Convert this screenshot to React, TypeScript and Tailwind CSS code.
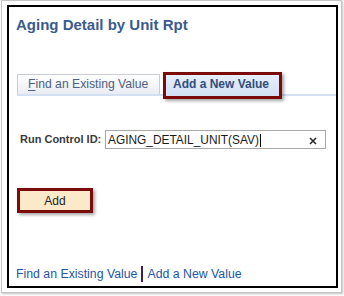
import React from "react";

export default function App() {
  return (
    <div className="w-[344px] h-[296px] bg-white pl-[1px] font-['Liberation_Sans',Arial,sans-serif]">
      <div className="w-[341px] h-[293px] border border-[#c4c4c4] shadow-[1px_1px_2px_rgba(0,0,0,0.25)] pl-[5px] pt-[4px]">
        <div className="w-[331px] h-[283px] border-2 border-black flex flex-col">
          <div className="ml-[7px] mt-[9px] text-[15px] leading-[18px] font-bold text-[#3b5a8e]">
            Aging Detail by Unit Rpt
          </div>

          <div className="ml-[8px] mt-[38px] h-[24px] flex items-start border-b-2 border-[#d3e0f1]">
            <div className="mt-[2px] w-[143px] h-[20px] border border-b-0 border-[#c9cdd3] bg-gradient-to-b from-white to-[#e9edf3] pl-[10px] text-[12.2px] leading-[18px] text-[#4c6183]">
              <span className="underline underline-offset-2">F</span>ind an Existing Value
            </div>
            <div className="relative z-10 ml-[3px] w-[119px] h-[27px] border-[3px] border-[#7b0a0a] bg-gradient-to-b from-[#e6eefa] to-[#d3e1f4] shadow-[2px_2px_3px_rgba(0,0,0,0.35)] pl-[7px] text-[12px] leading-[19px] font-bold text-[#2f4d7e]">
              Add a New Value
            </div>
          </div>

          <div className="mt-[34px] ml-[11px] flex items-center h-[19px]">
            <div className="w-[85px] text-[11px] font-bold text-[#3a3a3a] leading-[19px]">
              Run Control ID:
            </div>
            <div className="w-[221px] h-[19px] border border-[#a8a8a8] bg-white flex items-start pl-[2px] pt-[2px]">
              <span className="text-[11.9px] leading-[14px] text-[#1a1a1a]">
                AGING_DETAIL_UNIT(SAV)
              </span>
              <span className="inline-block w-[1px] h-[13px] bg-black ml-[1px] mt-[1px]" />
              <svg
                className="ml-auto mr-[8px] mt-[4px]"
                width="8"
                height="8"
                viewBox="0 0 8 8"
              >
                <path d="M1 1 L7 7 M7 1 L1 7" stroke="#2a2a2a" strokeWidth="1.6" />
              </svg>
            </div>
          </div>

          <div className="mt-[39px] ml-[8px] w-[76px] h-[25px] border-[3px] border-[#7b0a0a] shadow-[2px_2px_3px_rgba(0,0,0,0.35)] bg-[#fbe9c9] flex items-start justify-center">
            <span className="text-[12px] leading-[19px] pt-[1px] text-[#222]">Add</span>
          </div>

          <div className="mt-[53px] ml-[7px] flex items-center text-[12.3px] leading-[16px] text-[#2456a5]">
            <span>Find an Existing Value</span>
            <span className="inline-block w-[2px] h-[16px] bg-[#3b1d5a] mx-[4px]" />
            <span>Add a New Value</span>
          </div>
        </div>
      </div>
    </div>
  );
}
